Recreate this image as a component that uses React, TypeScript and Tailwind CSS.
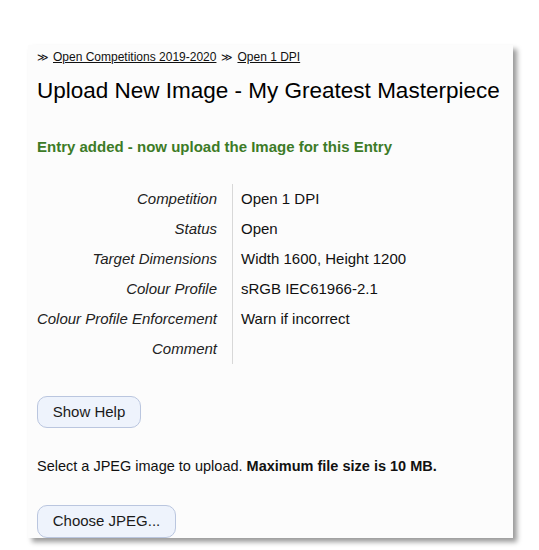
import React from 'react';

const rows: [string, string][] = [
    ['Competition', 'Open 1 DPI'],
    ['Status', 'Open'],
    ['Target Dimensions', 'Width 1600, Height 1200'],
    ['Colour Profile', 'sRGB IEC61966-2.1'],
    ['Colour Profile Enforcement', 'Warn if incorrect'],
    ['Comment', ''],
];

const App: React.FC = () => {
    return (
        <div className="min-h-[550px] bg-white pt-[45px] pl-[28px] font-['Liberation_Sans',Arial,sans-serif] text-[#1a1a1a]">
            <div className="w-[485px] h-[493px] overflow-hidden bg-[#fcfcfc] shadow-[4px_4px_5px_rgba(0,0,0,0.4)] pl-[9px] pt-[4px]">
                {/* Breadcrumb */}
                <div className="flex items-center gap-[4px] text-[12px] leading-[16px] text-[#111]">
                    <span className="text-[11px]">≫</span>
                    <a className="underline">Open Competitions 2019-2020</a>
                    <span className="text-[11px] ml-[1px]">≫</span>
                    <a className="underline">Open 1 DPI</a>
                </div>

                <h1 className="mt-[12px] text-[22.5px] leading-[28px] text-black whitespace-nowrap">
                    Upload New Image - My Greatest Masterpiece
                </h1>

                <p className="mt-[32px] text-[15px] leading-[20px] font-bold text-[#3d7b27]">
                    Entry added - now upload the Image for this Entry
                </p>

                {/* Details */}
                <div className="mt-[27px] flex">
                    <div className="w-[196px] shrink-0 pr-[15px] border-r border-[#d8d8d8] text-right italic">
                        {rows.map(([label]) => (
                            <div key={label} className="h-[30px] flex items-center justify-end whitespace-nowrap text-[15px] text-[#222]">
                                {label}
                            </div>
                        ))}
                    </div>
                    <div className="pl-[8px]">
                        {rows.map(([label, value]) => (
                            <div key={label} className="h-[30px] flex items-center text-[15px] text-[#111]">
                                {value}
                            </div>
                        ))}
                    </div>
                </div>

                <button className="mt-[32px] h-[32px] w-[104px] rounded-[10px] border border-[#bac6df] bg-[#eef3fc] text-[15px] text-[#1a1a1a]">
                    Show Help
                </button>

                <p className="mt-[28px] text-[14.5px] leading-[20px] text-[#111]">
                    Select a JPEG image to upload. <span className="font-bold">Maximum file size is 10 MB.</span>
                </p>

                <button className="mt-[29px] h-[33px] w-[139px] rounded-[10px] border border-[#bac6df] bg-[#eef3fc] text-[15px] text-[#1a1a1a]">
                    Choose JPEG...
                </button>
            </div>
        </div>
    );
};

export default App;
